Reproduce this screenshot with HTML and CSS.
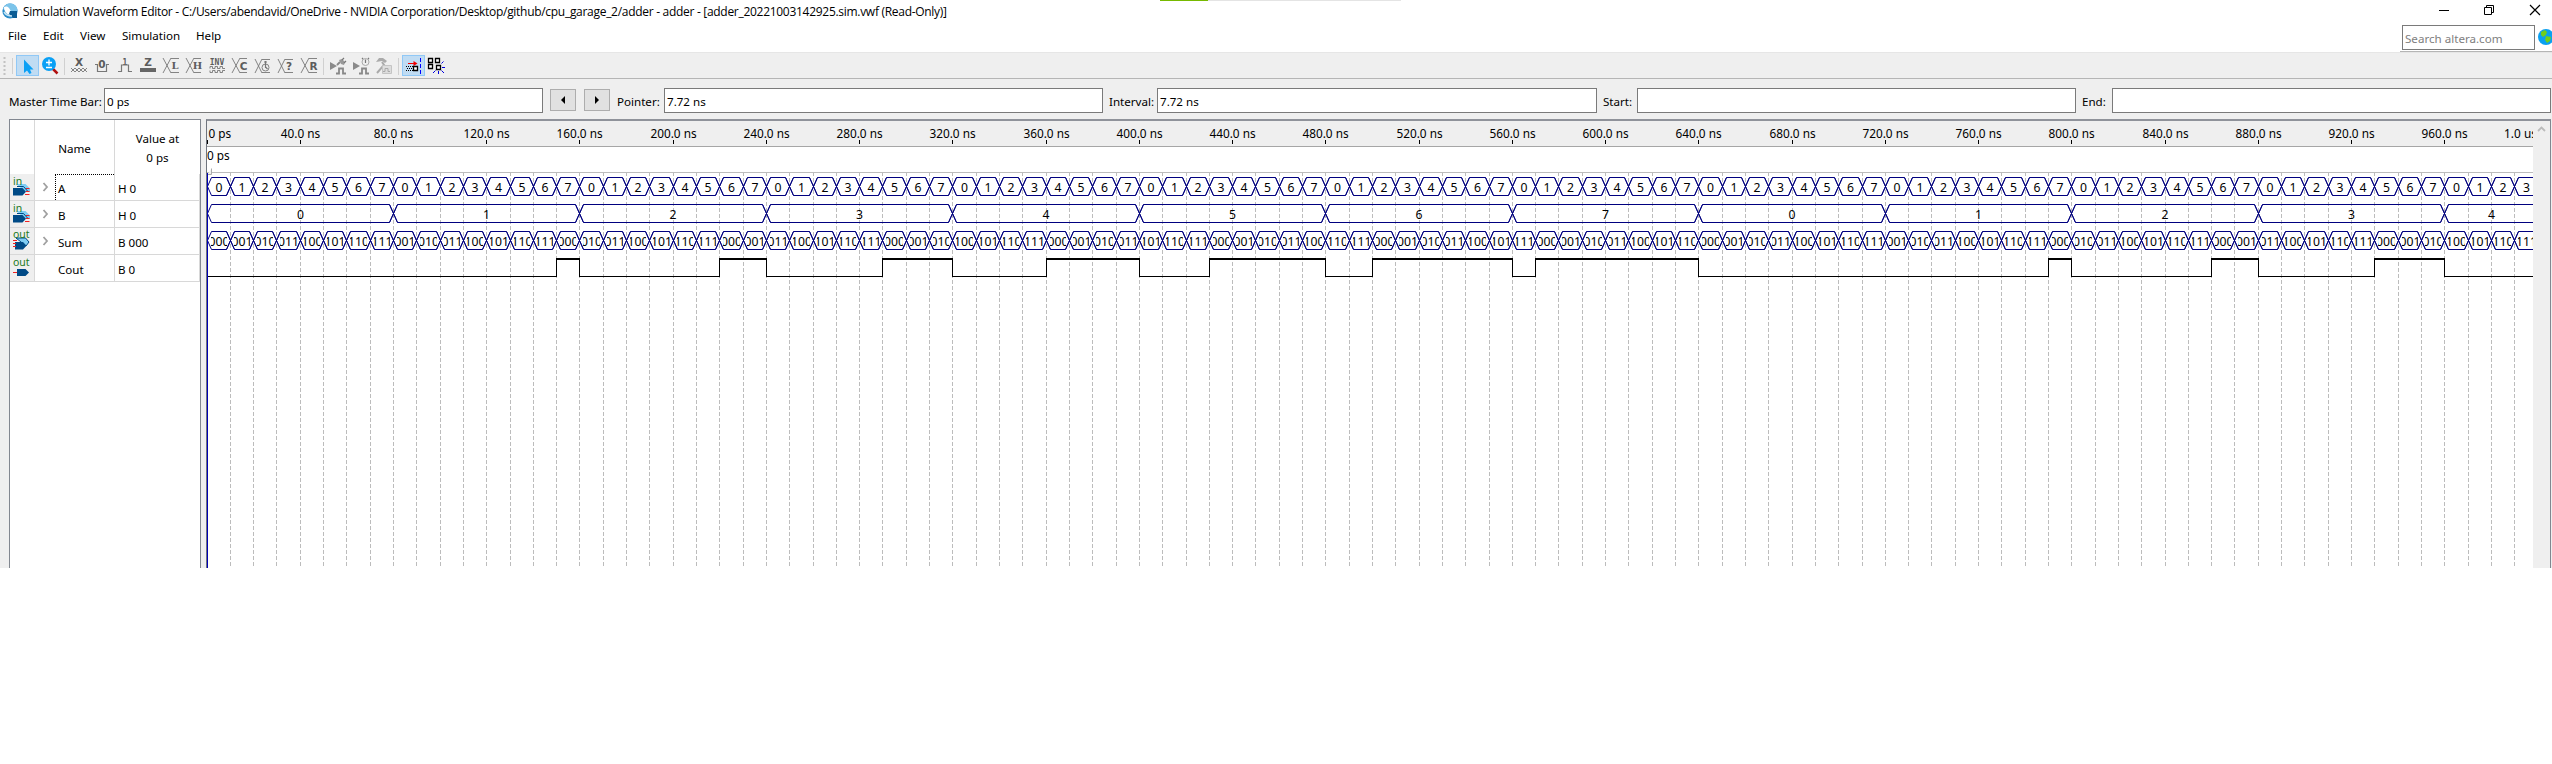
FILE: index.html
```
<!DOCTYPE html>
<html lang="en">
<head>
<meta charset="utf-8">
<title>Simulation Waveform Editor</title>
<link rel="stylesheet" href="styles.css">
</head>
<body>
<div class="progress"><span class="progress-done"></span></div>
<div class="window">
  <header class="titlebar">
    <svg class="app-icon" width="17" height="17" viewBox="0 0 17 17"><circle cx="8" cy="8" r="7.6" fill="#2b8cc9"/><path d="M1 6C2 2 6 0 9 .6 13 1 15.500 4 15.500 7.500L13 11C9 11 5 9 1 6Z" fill="#7cc4ea"/><path d="M2 4C4 3 6 3.500 7 5L10 10 8 12C4 11 2 8 2 4Z" fill="#fff"/><path d="M8 8h7v7H11L7 11Z" fill="#0b5c94"/><path d="M2 9C4 12 7 13 10 13" fill="none" stroke="#c9e6f5" stroke-width="1.500"/></svg>
    <svg class="title-text" width="930" height="24"><text x="0" y="16" textLength="924">Simulation Waveform Editor - C:/Users/abendavid/OneDrive - NVIDIA Corporation/Desktop/github/cpu_garage_2/adder - adder - [adder_20221003142925.sim.vwf (Read-Only)]</text></svg>
    <svg class="window-buttons" width="113" height="24" fill="none" stroke="#000" stroke-width="1"><path d="M0 10.500h10"/><path d="M45.500 7.500h7v7h-7zM47.500 7.500v-2h7v7h-2"/><path d="M91 5l10 10M101 5l-10 10" stroke-width="1.200"/></svg>
  </header>
  <nav class="menubar">
    <span class="m-file">File</span><span class="m-edit">Edit</span><span class="m-view">View</span><span class="m-sim">Simulation</span><span>Help</span>
    <div class="search">
      <div class="search-box">Search altera.com</div>
      <svg width="14" height="17" viewBox="0 0 14 17"><circle cx="8" cy="8" r="8" fill="#0aa0f0"/><path d="M3 3L7 1 9 3 8 6 5 8 3 6ZM8 7L13 8 12 12 9 14 7 11Z" fill="#6fce1c"/></svg>
    </div>
  </nav>
  <div class="toolbar">
    <svg class="grip" width="16" height="21"><path d="M4.500 2v18" stroke="#c2c2c2" stroke-width="2" stroke-dasharray="2 2"/><path d="M12.500 3v16" stroke="#d0d0d0"/></svg>
    <span class="tool active"><svg><path d="M8 4.500V18L11 15.500 13.500 19 15.500 18 14 14.500H17.500Z" fill="#0aa0f5"/></svg></span>
    <span class="tool"><svg><path d="M13 13l5.500 5.500" stroke="#b01010" stroke-width="2.500"/><circle cx="10" cy="9" r="7" fill="#0aa0f5"/><path d="M7 7.500h6M10 4.500v6M7 12.500h6" stroke="#fff" stroke-width="1.300"/></svg></span>
    <i class="sep"></i>
    <span class="tool"><svg><text x="11" y="11" class="glyph">X</text><path d="M3 13l4 4 4-4 4 4 4-4M3 17l4-4 4 4 4-4 4 4" class="thin"/></svg></span>
    <span class="tool"><svg><text x="11" y="12.500" class="glyph">0</text><path d="M4 9.500h2.500v7h9v-7H18" class="line"/></svg></span>
    <span class="tool"><svg><text x="11" y="9.500" class="glyph small">1</text><path d="M4 16.500h3.500V10h7v6.500H18" class="line"/></svg></span>
    <span class="tool"><svg><text x="11" y="11" class="glyph">Z</text><path d="M3 15h16" stroke="#666" stroke-width="4"/></svg></span>
    <span class="tool"><svg><path d="M3 3l8 15M11 3L3 18M11 3.500h8M11 17.500h8" class="thin"/><text x="15" y="14" class="glyph serif">L</text></svg></span>
    <span class="tool"><svg><path d="M3 3l8 15M11 3L3 18M11 3.500h7M11 17.500h7" class="thin"/><text x="14.500" y="14" class="glyph serif">H</text></svg></span>
    <span class="tool"><svg><text x="11" y="9.500" class="glyph small">INV</text><path d="M4 13.500v-2h2.500v2H9v-2h2.500v2H14v-2h2.500v2H19M4 15.500v2h2.500v-2H9v2h2.500v-2H14v2h2.500v-2H19" class="thin"/></svg></span>
    <span class="tool"><svg><path d="M3 3l8 15M11 3L3 18M11 3.500h7M11 17.500h7" class="thin"/><text x="14.500" y="14.500" class="glyph">C</text></svg></span>
    <span class="tool"><svg><path d="M3 4l7 14M10 4L3 18M10 4.500h8M10 17.500h8" class="thin"/><circle cx="13.500" cy="12.500" r="3.500" class="thin"/><path d="M13.500 6v7M12 7h3M13.500 12l2 2" class="line"/></svg></span>
    <span class="tool"><svg><path d="M3 4l7 14M10 4L3 18M10 4.500h8M10 17.500h8" class="thin"/><text x="14" y="15" class="glyph">?</text></svg></span>
    <span class="tool"><svg><path d="M3 3l8 15M11 3L3 18M11 3.500h8M11 17.500h8" class="thin"/><text x="15.500" y="14.500" class="glyph">R</text></svg></span>
    <i class="sep"></i>
    <span class="tool"><svg><path d="M3 7l7 4-7 4z" fill="#8a8a8a"/><path d="M9 18.500h3v-5h4v5h3M10 10l3-3" class="wide"/><path d="M12 5l3-1 3 3-1 3-3-1z" fill="#999"/><path d="M15 5l2-2M17 8l2-2" class="line"/></svg></span>
    <span class="tool"><svg><path d="M3 7l7 4-7 4z" fill="#8a8a8a"/><path d="M9 18.500h3v-5h4v5h3" class="wide"/><circle cx="15.500" cy="7" r="3.500" class="soft"/><path d="M15.500 4.500V8M12 3l1 1M19 3l-1 1" class="line"/></svg></span>
    <span class="tool"><svg><path d="M3 7l3-4h4l4 3-2 2-3-2z" fill="#aaa"/><path d="M9 7l2 3-7 8" class="soft" stroke-width="2"/><path d="M9.500 10.500h9v8h-9z" fill="#ddd" stroke="#c4c4c4"/><path d="M10 16.500h2v-3h3v3h2" class="soft"/></svg></span>
    <i class="sep"></i>
    <span class="tool active"><svg><path d="M6 8.500h7" stroke="#e00" /><path d="M11.500 6l4 2.500-4 2.500z" fill="#e00"/><path d="M4 11.500h7M4 15.500h7" stroke="#000" stroke-dasharray="1 1"/><path d="M5 13.500h6" stroke="#000" stroke-dasharray="1 1"/><path d="M11.500 11.500h4v4h-4z" fill="#fff" stroke="#000" stroke-width="1.300"/><path d="M18.500 3v17" stroke="#00f" stroke-dasharray="4 2"/></svg></span>
    <span class="tool"><svg><path d="M3.500 3.500h4v4h-4zM10.500 3.500h4v4h-4zM3.500 9.500h4v4h-4zM11.500 10.500h4v4h-4z" fill="#fff" stroke="#000" stroke-width="1.300"/><path d="M16.500 8.500l2-2M17 12.500h3M16.500 15.500l2.500 2.500M13.500 16v3M10.500 15.500L8 18" stroke="#00d" fill="none"/></svg></span>
  </div>
  <div class="timebar">
    <label class="l-master">Master Time Bar:</label><div class="field">0 ps</div>
    <button class="step first"><svg width="6" height="8"><path d="M5 0v8L1 4z"/></svg></button>
    <button class="step"><svg width="6" height="8"><path d="M1 0v8l4-4z"/></svg></button>
    <label class="l-pointer">Pointer:</label><div class="field">7.72 ns</div>
    <label class="l-interval">Interval:</label><div class="field w440">7.72 ns</div>
    <label class="l-start">Start:</label><div class="field"></div>
    <label class="l-end">End:</label><div class="field"></div>
  </div>
  <main class="editor">
    <section class="signals">
      <div class="row head"><span></span><span class="head-name">Name</span><span>Value at<br>0 ps</span></div>
      <div class="row"><span class="pin"><svg viewBox="0 0 24 26"><path d="M6 10h9.500l4.500 4.500V18h-4z" fill="#7fcdf3"/><path d="M7 12.500h6.500l4 4.500" fill="none" stroke="#004a86"/><path d="M3 14h9.500l3.500 3.700-3.500 3.800H3z" fill="#004a86"/><path d="M16 14.500h3.500M16 17.500h3.500M15 20.500h4.500" stroke="#e22"/><text x="3" y="10.500" class="pin-text">in</text></svg></span><span class="name"><svg class="chev"><path d="M1.500 1L5 5 1.500 9"/></svg><b class="focus">A</b></span><span class="value">H 0</span></div>
      <div class="row"><span class="pin"><svg viewBox="0 0 24 26"><path d="M6 10h9.500l4.500 4.500V18h-4z" fill="#7fcdf3"/><path d="M7 12.500h6.500l4 4.500" fill="none" stroke="#004a86"/><path d="M3 14h9.500l3.500 3.700-3.500 3.800H3z" fill="#004a86"/><path d="M16 14.500h3.500M16 17.500h3.500M15 20.500h4.500" stroke="#e22"/><text x="3" y="10.500" class="pin-text">in</text></svg></span><span class="name"><svg class="chev"><path d="M1.500 1L5 5 1.500 9"/></svg><b>B</b></span><span class="value">H 0</span></div>
      <div class="row"><span class="pin"><svg viewBox="0 0 24 26"><path d="M6 10h9.500l3.500 4-3 4z" fill="#7fcdf3" stroke="#004a86"/><path d="M5 14h8l3.500 3.700-3.500 3.800H5z" fill="#004a86"/><path d="M3 12.500h4M3 15.500h3M3 18.500h3" stroke="#e22"/><text x="3" y="10" class="pin-text">out</text></svg></span><span class="name"><svg class="chev"><path d="M1.500 1L5 5 1.500 9"/></svg><b>Sum</b></span><span class="value">B 000</span></div>
      <div class="row"><span class="pin"><svg viewBox="0 0 24 26"><path d="M3 17.500h5" stroke="#e22"/><path d="M7 14h8.500l3.500 3.500-3.500 3.500H7z" fill="#004a86"/><text x="3" y="11" class="pin-text">out</text></svg></span><span class="name"><svg class="chev"></svg><b>Cout</b></span><span class="value">B 0</span></div>
    </section>
    <section class="waves">
      <svg id="waves" width="2326" height="447" viewBox="207 121 2326 447"></svg>
      <div class="scroll"><svg width="9" height="6"><path d="M1 5l3.500-3.500L8 5" fill="none" stroke="#bbb" stroke-width="1.800"/></svg></div>
    </section>
  </main>
</div>
<script src="waves.js"></script>
</body>
</html>
```
FILE: styles.css
```
* { box-sizing: border-box; }
body { margin: 0; background: #fff; color: #000; font: 11.600px/16px "Noto Sans", "Open Sans", sans-serif; overflow: hidden; }
.progress { position: absolute; top: 0; left: 1160px; width: 241px; height: 1px; background: #e4e4e4; }
.progress-done { display: block; width: 48px; height: 1px; background: #76b900; }
.window { width: 2552px; height: 568px; display: flex; flex-direction: column; background: #efefef; }

.titlebar { display: flex; height: 24px; background: #fff; padding-left: 2px; }
.app-icon { margin: 3px 4px 0 0; }
.title-text text { font: 12px "Open Sans", "Noto Sans", sans-serif; }
.window-buttons { margin-left: auto; }

.menubar { display: flex; height: 28px; background: #fff; padding-left: 8px; line-height: 24px; }
.menubar > span { flex: none; }
.m-file { width: 35px; }
.m-edit { width: 37px; }
.m-view { width: 42px; }
.m-sim { width: 74px; }
.search { display: flex; gap: 3px; margin-left: auto; padding: 1px 0 0 2px; border-bottom: 1px solid #b5b5b5; width: 152px; }
.search > svg { margin-top: 4px; flex: none; }
.search-box { width: 133px; height: 25px; border: 1px solid #7a7a7a; padding-left: 2px; line-height: 26px; color: #808080; white-space: nowrap; }

.toolbar { display: flex; height: 27px; padding-top: 2px; border-top: 1px solid #e6e6e6; border-bottom: 1px solid #b5b5b5; }
.tool { width: 23px; height: 21px; }
.tool svg { width: 23px; height: 21px; display: block; overflow: visible; }
.active { background: #c0dcf3; outline: 1px solid #90c8f6; outline-offset: -1px; }
.sep { width: 1px; margin: 3px 3px 3px 2px; background: #d0d0d0; }
.glyph { font: bold 10.500px "DejaVu Sans", sans-serif; fill: #5c5c5c; text-anchor: middle; }
.glyph.serif { font: bold 10px "DejaVu Serif", serif; }
.glyph.small { font: bold 8px "DejaVu Sans Mono", monospace; }
.thin { stroke: #777; stroke-width: .9; fill: none; }
.line { stroke: #777; stroke-width: 1.200; fill: none; }
.wide { stroke: #888; stroke-width: 1.800; fill: none; }
.soft { stroke: #aaa; fill: none; }

.timebar { display: flex; height: 40px; padding: 9px 0 6px 9px; line-height: 28px; white-space: nowrap; }
.timebar label { flex: none; }
.l-master { width: 95px; }
.l-pointer { width: 47px; margin-left: 7px; }
.l-interval { width: 48px; margin-left: 6px; }
.l-start { width: 34px; margin-left: 6px; }
.l-end { width: 30px; margin-left: 6px; }
.field { width: 439px; height: 25px; flex: none; border: 1px solid #7a7a7a; background: #fff; padding-left: 2px; line-height: 26px; }
.w440 { width: 440px; }
.step { width: 26px; height: 22px; flex: none; margin-top: 1px; padding: 0; border: 1px solid #adadad; background: #e1e1e1; display: flex; align-items: center; justify-content: center; }
.step.first { margin: 1px 8px 0 7px; }

.editor { display: flex; height: 449px; gap: 5px; padding-left: 9px; }
.signals { width: 192px; border: 1px solid #828790; border-bottom: 0; background: #fff; }
.row { display: grid; grid-template: 100% / 25px 80px 1fr; height: 27px; }
.row > span { border-right: 1px solid #d8d8d8; border-bottom: 1px solid #d8d8d8; min-height: 0; }
.head { height: 54px; line-height: 19px; text-align: center; }
.head > span { border-bottom: 0; display: flex; align-items: center; justify-content: center; padding-top: 1px; }
.head > .head-name { padding-top: 2px; }
.head > span:last-child { border-right: 0; }
.pin { background: #efefef; }
.pin svg { width: 24px; height: 26px; display: block; }
.pin-text { font: 10.500px "Noto Sans", sans-serif; fill: #1c7a1c; }
.name { display: flex; }
.chev { width: 7px; height: 10px; margin: 8px 6px 0 7px; flex: none; fill: none; stroke: #a0a0a0; stroke-width: 1.800; }
.name b { flex: 1; font-weight: 400; padding-left: 3px; line-height: 29px; }
.name .focus { border-top: 1px dotted #000; border-left: 1px dotted #000; padding-left: 2px; line-height: 27px; }
.value { padding-left: 3px; line-height: 29px; }

.waves { width: 2345px; display: flex; border: 1px solid #828790; border-left-color: #70757e; border-bottom: 0; border-top: 2px solid #8f929a; background: #fff; }
.waves > svg { flex: none; }
.scroll { width: 17px; background: #efefef; padding: 5px 0 0 4px; line-height: 0; }
.ruler-label, .bus-label { font: 11.800px "Noto Sans", sans-serif; fill: #000; text-anchor: middle; }
.bus-label { font-size: 12.200px; }
.ruler-label.start { text-anchor: start; }
.grid { stroke: #bcbcbc; stroke-dasharray: 4 2; }
.bus { stroke: #00007f; fill: none; }
.bit { fill: #000; }
```
FILE: waves.js
```
const svg = document.getElementById('waves');
const LEFT = 207, STEP = 23.31, END = 2533;
const at = n => Math.floor(LEFT + STEP * n);
const out = [];

out.push('<rect x="207" y="121" width="2326" height="25" fill="#efefef"/>');
out.push('<rect x="207" y="146" width="2326" height="1" fill="#a6a6a6"/>');
out.push('<rect x="207" y="172" width="2326" height="1" fill="#bcbcbc"/>');
out.push('<path d="M207.500 174.500h4v-6" stroke="#aaa" fill="#efefef"/>');

for (let n = 1; n < 100; n++) {
  out.push(`<path class="grid" d="M${at(n) + .5} 172V566"/>`);
}

for (let n = 0; n < 100; n += 4) {
  out.push(`<rect x="${at(n)}" y="140" width="1" height="4"/>`);
  if (n) out.push(`<text class="ruler-label" x="${at(n) + .5}" y="138">${n * 10}.0 ns</text>`);
}
out.push('<text class="ruler-label start" x="208.500" y="138">0 ps</text>');
out.push('<text class="ruler-label start" x="2504" y="138" textLength="33">1.0 us</text>');
out.push('<text class="ruler-label start" x="207" y="160">0 ps</text>');

function bus(from, to, top, label) {
  const a = at(from) + .5, b = at(to) + .5, t = top + .5, u = top + 18.5, m = top + 9.5;
  out.push(`<path class="bus" d="M${a} ${m}L${a + 4} ${t}H${b - 4}L${b} ${m}L${b - 4} ${u}H${a + 4}Z"/>`);
  if (from) out.push(`<path class="bus" d="M${a - 4} ${t}L${a + 4} ${u}M${a - 4} ${u}L${a + 4} ${t}"/>`);
  const id = `c${from}-${top}`;
  out.push(`<clipPath id="${id}"><rect x="${a + 3.5}" y="${top}" width="${b - a - 7}" height="19"/></clipPath>`);
  out.push(`<g clip-path="url(#${id})"><text class="bus-label" x="${(a + b) / 2}" y="${top + 15}">${label}</text></g>`);
}

for (let n = 0; n < 100; n++) {
  const a = n % 8, b = Math.floor(n / 8) % 8;
  bus(n, n + 1, 177, a);
  bus(n, n + 1, 231, ((a + b) % 8).toString(2).padStart(3, '0'));
}
for (let n = 0; n < 100; n += 8) bus(n, Math.min(n + 8, 100), 204, (n / 8) % 8);

let level = 0, startX = LEFT;
for (let n = 0; n <= 100; n++) {
  const carry = (n % 8) + (Math.floor(n / 8) % 8) >= 8 ? 1 : 0;
  if (carry !== level || n === 100) {
    const x = n === 100 ? END : at(n);
    out.push(`<rect class="bit" x="${startX}" y="${level ? 258 : 276}" width="${x - startX + 1}" height="${level ? 2 : 1}"/>`);
    if (n < 100) out.push(`<rect class="bit" x="${x}" y="258" width="1" height="19"/>`);
    level = carry;
    startX = x;
  }
}
out.push('<rect x="207" y="173" width="1" height="395" fill="#0000b4"/>');
svg.innerHTML = out.join('');
```
